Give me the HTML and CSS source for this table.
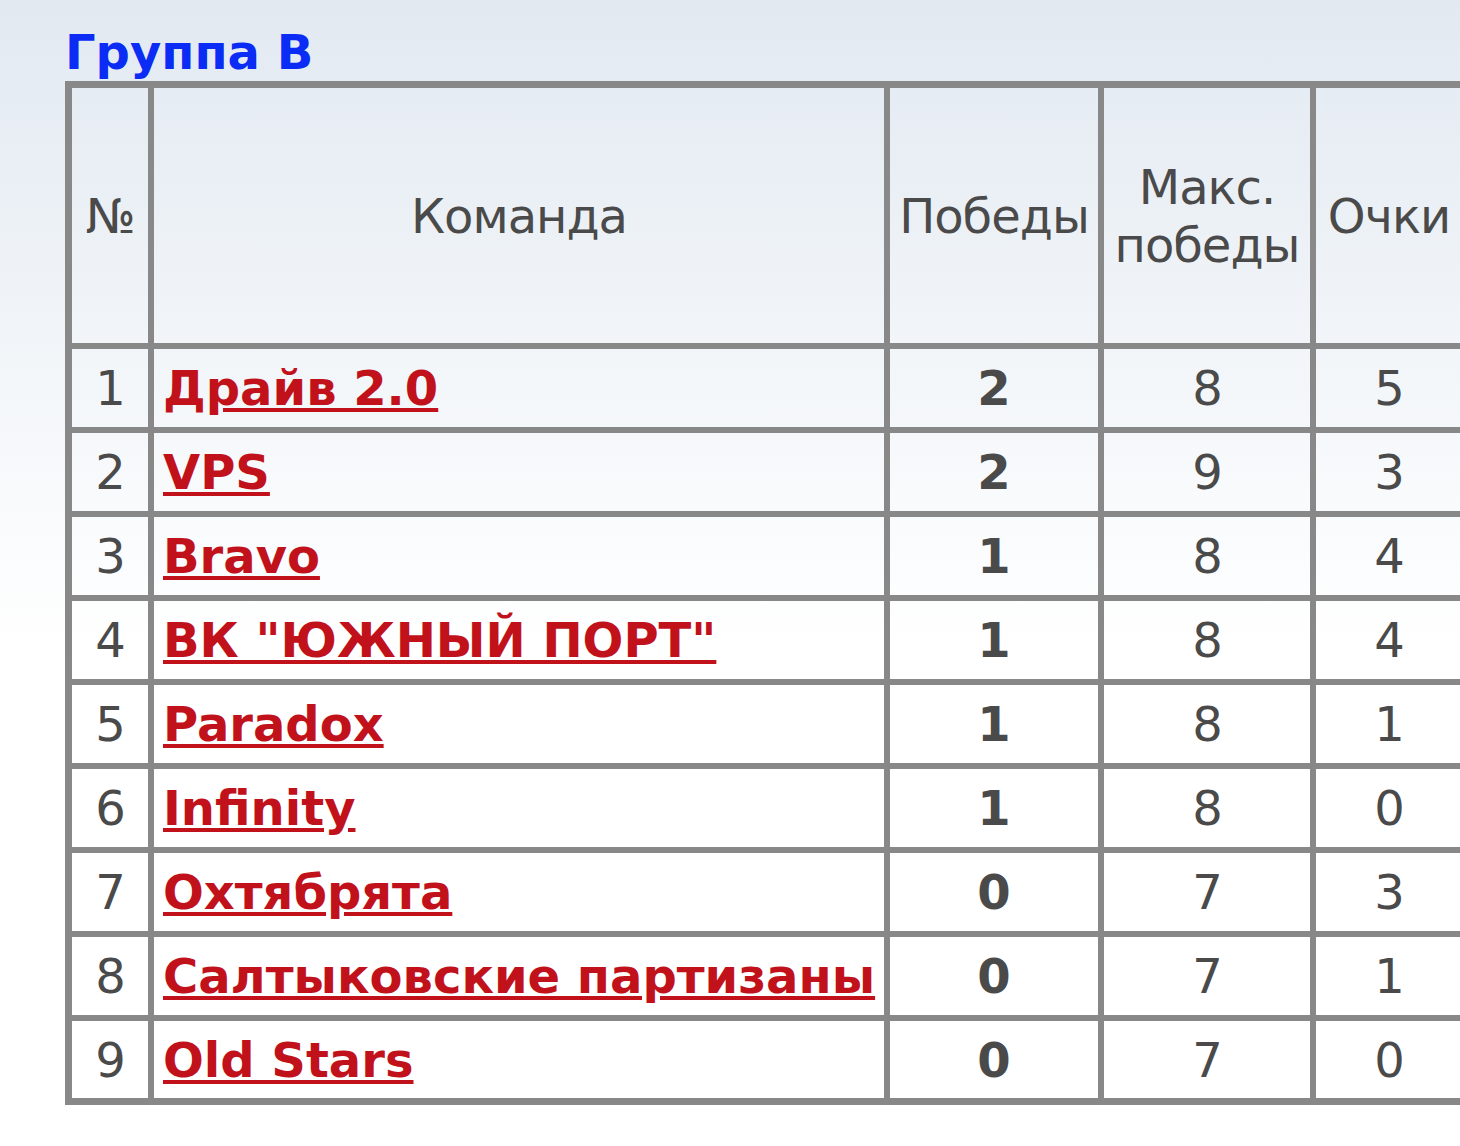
FILE: index.html
```html
<!DOCTYPE html>
<html lang="ru">
<head>
<meta charset="utf-8">
<title>Группа B</title>
<link rel="stylesheet" href="styles.css">
</head>
<body>
<div class="page">
  <h2 class="group-title">Группа В</h2>
  <table class="standings">
    <colgroup>
      <col class="c-num"><col class="c-team"><col class="c-wins"><col class="c-max"><col class="c-pts">
    </colgroup>
    <thead>
      <tr>
        <th>№</th>
        <th>Команда</th>
        <th>Победы</th>
        <th>Макс. победы</th>
        <th class="last">Очки</th>
      </tr>
    </thead>
    <tbody>
      <tr><td>1</td><td class="team"><a href="#">Драйв 2.0</a></td><td class="wins">2</td><td>8</td><td class="last">5</td></tr>
      <tr><td>2</td><td class="team"><a href="#">VPS</a></td><td class="wins">2</td><td>9</td><td class="last">3</td></tr>
      <tr><td>3</td><td class="team"><a href="#">Bravo</a></td><td class="wins">1</td><td>8</td><td class="last">4</td></tr>
      <tr><td>4</td><td class="team"><a href="#">ВК "ЮЖНЫЙ ПОРТ"</a></td><td class="wins">1</td><td>8</td><td class="last">4</td></tr>
      <tr><td>5</td><td class="team"><a href="#">Paradox</a></td><td class="wins">1</td><td>8</td><td class="last">1</td></tr>
      <tr><td>6</td><td class="team"><a href="#">Infinity</a></td><td class="wins">1</td><td>8</td><td class="last">0</td></tr>
      <tr><td>7</td><td class="team"><a href="#">Охтябрята</a></td><td class="wins">0</td><td>7</td><td class="last">3</td></tr>
      <tr><td>8</td><td class="team"><a href="#">Салтыковские партизаны</a></td><td class="wins">0</td><td>7</td><td class="last">1</td></tr>
      <tr class="final"><td>9</td><td class="team"><a href="#">Old Stars</a></td><td class="wins">0</td><td>7</td><td class="last">0</td></tr>
    </tbody>
  </table>
</div>
</body>
</html>
```
FILE: styles.css
```css
html {
  overflow: hidden;
  background: #ffffff;
}
body {
  margin: 0;
  min-height: 1146px;
  background: linear-gradient(to bottom, #e2e9f1 0px, #f4f7fa 400px, #ffffff 650px, #ffffff 100%);
  font-family: "DejaVu Sans", Verdana, sans-serif;
  color: #4a4a4a;
}
.page {
  padding: 23px 0 0 65px;
}
.group-title {
  margin: 0;
  font-size: 48px;
  line-height: 58px;
  font-weight: bold;
  color: #0b2cf5;
}
.standings {
  border-collapse: separate;
  border-spacing: 0;
  table-layout: fixed;
  width: 1404px;
  border: 7px solid #888888;
  font-size: 48px;
  line-height: 58px;
}
.c-num { width: 82px; }
.c-team { width: 736px; }
.c-wins { width: 214px; }
.c-max { width: 212px; }
.c-pts { width: 146px; }
.standings th,
.standings td {
  box-sizing: border-box;
  border-right: 6px solid #888888;
  border-bottom: 6px solid #888888;
  padding: 0;
  text-align: center;
  vertical-align: middle;
  font-weight: normal;
  letter-spacing: -1px;
  white-space: normal;
}
.standings th {
  height: 261px;
}
.standings td {
  height: 84px;
}
.standings .last {
  border-right: none;
}
.standings tr.final td {
  border-bottom: none;
  height: 77px;
}
.standings td.team {
  text-align: left;
  padding-left: 9px;
  letter-spacing: 0;
  white-space: nowrap;
}
.standings td.wins {
  font-weight: bold;
  letter-spacing: 0;
}
.team a {
  color: #c1121c;
  font-weight: bold;
  text-decoration: underline;
}
```
